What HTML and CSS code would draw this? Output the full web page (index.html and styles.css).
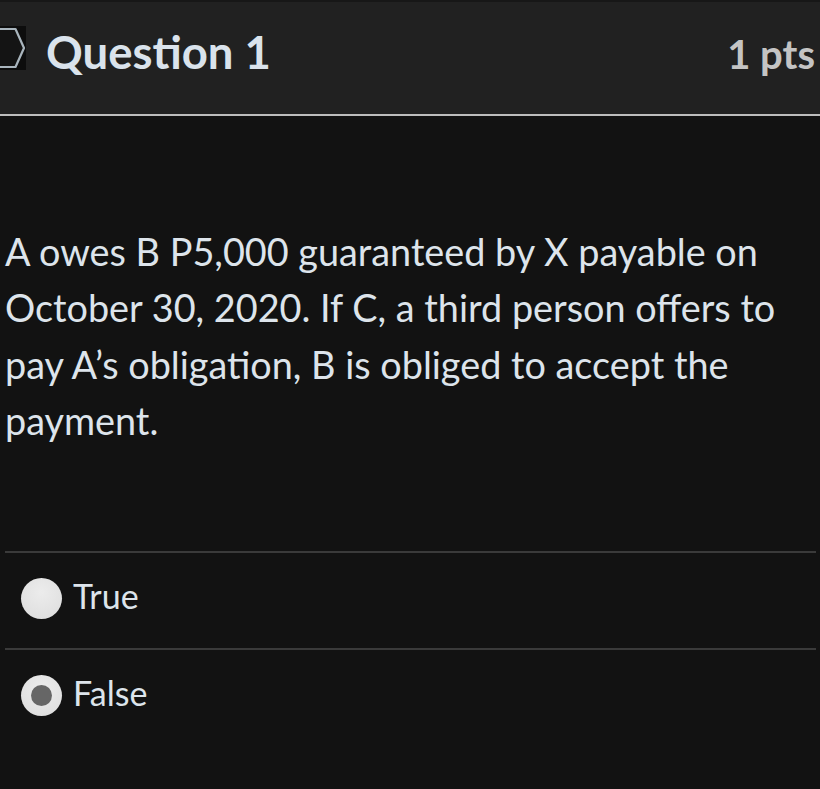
FILE: index.html
```html
<!DOCTYPE html>
<html>
<head>
<meta charset="utf-8">
<link rel="stylesheet" href="styles.css">
</head>
<body>
<div class="page">
  <header class="header">
    <h2 class="title"><svg class="flag" width="26" height="44" viewBox="0 0 26 44"><rect x="0" y="0" width="26" height="44" fill="#0d0d0d"/><path d="M-6 3 H15.5 L24 22 L15.5 41 H-6" fill="#141414" stroke="#a9b5bd" stroke-width="2.2" stroke-linejoin="round"/></svg>Question 1</h2>
    <span class="pts">1 pts</span>
  </header>
  <main class="body">
    <p class="question">A owes B P5,000 guaranteed by X payable on October 30, 2020. If C, a third person offers to pay A’s obligation, B is obliged to accept the payment.</p>
    <ul class="answers">
      <li class="answer"><span class="radio"></span><span class="label">True</span></li>
      <li class="answer"><span class="radio checked"></span><span class="label">False</span></li>
    </ul>
  </main>
</div>
</body>
</html>
```

FILE: styles.css
```css
html, body {
  margin: 0;
  padding: 0;
  background: #121212;
}
body {
  width: 820px;
  height: 789px;
  overflow: hidden;
  font-family: Lato, "Open Sans", sans-serif;
  color: #dde4eb;
}
.header {
  height: 112px;
  border-top: 2px solid #171717;
  border-bottom: 2px solid #bdbdbd;
  background: #212121;
  display: flex;
  justify-content: space-between;
  align-items: baseline;
  padding: 0 5px 0 0;
  box-sizing: content-box;
}
.title {
  margin: 23px 0 0 0;
  font-size: 45.5px;
  line-height: 1.2;
  font-weight: 700;
  color: #dae3ec;
}
.flag {
  vertical-align: -1px;
  margin-right: 20px;
}
.pts {
  font-size: 40px;
  line-height: 1.2;
  font-weight: 700;
  color: #c4c4c4;
}
.body {
  padding: 0 4px 0 5px;
}
.question {
  margin: 108px 0 0 0;
  font-size: 37.8px;
  line-height: 56.3px;
  color: #dde4eb;
}
.answers {
  list-style: none;
  margin: 102px 0 0 0;
  padding: 0;
}
.answer {
  border-top: 2px solid #3a3a3a;
  height: 90px;
  padding-bottom: 5px;
  display: flex;
  align-items: center;
}
.radio {
  width: 41px;
  height: 41px;
  border-radius: 50%;
  margin-left: 16px;
  background: radial-gradient(circle at 50% 35%, #ececec 0%, #dcdcdc 100%);
  display: flex;
  align-items: center;
  justify-content: center;
}
.radio.checked::after {
  content: "";
  width: 21px;
  height: 21px;
  border-radius: 50%;
  background: #666666;
}
.label {
  margin: 0 0 6px 11px;
  font-size: 34px;
  color: #dde4eb;
}
```
